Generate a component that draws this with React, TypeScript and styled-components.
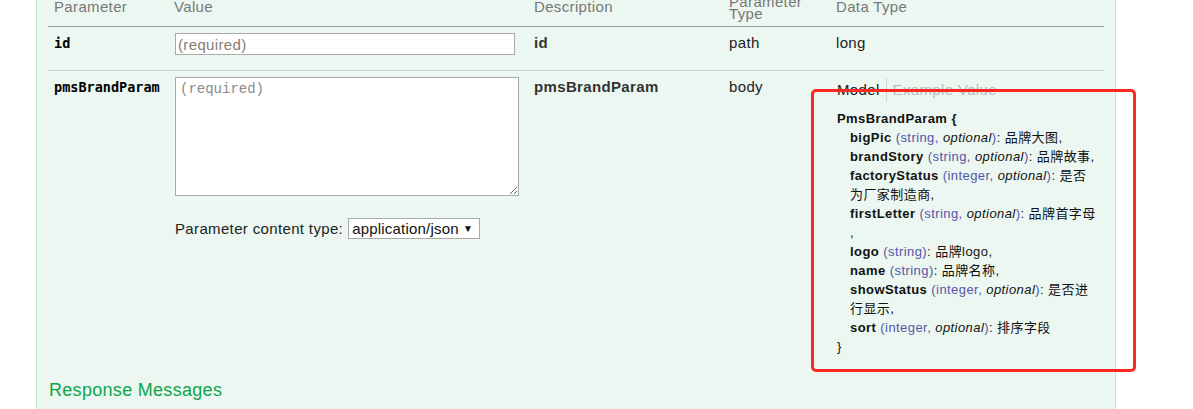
import React from "react";
import styled, { createGlobalStyle } from "styled-components";

// ---------------- Global ----------------

const GlobalStyle = createGlobalStyle`
  html, body {
    margin: 0;
    padding: 0;
    background: #ffffff;
  }
  body {
    font-family: "Liberation Sans", "Noto Sans CJK SC", sans-serif;
    letter-spacing: 0.35px;
    color: #222;
    overflow: hidden;
  }
`;

// ---------------- Styled Components ----------------

const Page = styled.div`
  position: relative;
  height: 409px;
  overflow: hidden;
  padding-left: 36px;
`;

const Panel = styled.div`
  box-sizing: border-box;
  width: 1080px;
  margin-top: -40px;
  padding: 0 11px 40px;
  background-color: #ebf7f0;
  border-left: 1px solid #c3e8d1;
  border-right: 1px solid #c3e8d1;
`;

const Table = styled.table`
  width: 1056px;
  table-layout: fixed;
  border-collapse: collapse;
`;

const Th = styled.th<{ $twoLine?: boolean }>`
  height: 56px;
  padding: 0 6px ${({ $twoLine }) => ($twoLine ? "6px" : "10px")};
  vertical-align: bottom;
  text-align: left;
  font-weight: normal;
  font-size: 15px;
  line-height: ${({ $twoLine }) => ($twoLine ? "12px" : "18px")};
  color: #777;
  border-bottom: 1px solid #999;
`;

const Tr = styled.tr<{ $last?: boolean }>`
  border-bottom: ${({ $last }) => ($last ? "none" : "1px solid #cfcfcf")};
`;

const Td = styled.td`
  padding: 6px 6px 15px;
  vertical-align: top;
  font-size: 15px;
  line-height: 20px;
`;

const Code = styled.span`
  font-family: "DejaVu Sans Mono", "Liberation Mono", monospace;
  font-weight: bold;
  font-size: 13.5px;
  letter-spacing: 0;
  color: #000;
`;

const Strong = styled.span`
  font-weight: bold;
  color: #333;
`;

const TextInput = styled.input`
  box-sizing: border-box;
  display: block;
  width: 340px;
  height: 22px;
  margin: 0 0 0 1px;
  padding: 0 2px;
  border: 1px solid #aaa;
  background: #fff;
  font-family: "Liberation Sans", sans-serif;
  font-size: 15px;
  letter-spacing: 0.35px;
  &::placeholder {
    color: #857c72;
  }
`;

const TextArea = styled.textarea`
  box-sizing: border-box;
  display: block;
  width: 344px;
  height: 119px;
  margin: 0 0 0 1px;
  padding: 3px 4px;
  border: 1px solid #aaa;
  background: #fff;
  font-family: "Liberation Mono", monospace;
  font-size: 14px;
  &::placeholder {
    color: #8a8a8a;
  }
`;

const ContentType = styled.div`
  display: flex;
  align-items: center;
  gap: 5px;
  margin-top: 22px;
  margin-left: 1px;
  font-size: 15px;
  color: #222;
`;

const SelectBox = styled.div`
  box-sizing: border-box;
  display: flex;
  align-items: center;
  width: 132px;
  height: 21px;
  border: 1px solid #a9a9a9;
  background: #fff;
  padding: 0 6px 0 3px;
`;

const Select = styled.select`
  flex: 1;
  min-width: 0;
  appearance: none;
  border: none;
  outline: none;
  background: transparent;
  padding: 0;
  font-family: "Liberation Sans", sans-serif;
  font-size: 15px;
  letter-spacing: 0.2px;
  color: #111;
`;

const Arrow = styled.span`
  font-size: 10px;
  color: #111;
`;

const Tabs = styled.div`
  display: flex;
  align-items: stretch;
  height: 24px;
  margin-top: 1px;
`;

const Tab = styled.span<{ $active?: boolean }>`
  display: flex;
  align-items: center;
  padding: ${({ $active }) => ($active ? "0 6px 0 1px" : "0 0 0 6px")};
  border-right: ${({ $active }) => ($active ? "1px solid #d5d5d5" : "none")};
  font-size: 15px;
  color: ${({ $active }) => ($active ? "#222" : "#bbb")};
`;

const Model = styled.div`
  margin-top: 7px;
  margin-left: 1px;
  padding-right: 1px;
  font-size: 13px;
  line-height: 19px;
  letter-spacing: 0.43px;
  color: #111;
`;

const ModelName = styled.div`
  font-weight: bold;
`;

const Prop = styled.div`
  margin-left: 13px;
`;

const PropName = styled.span`
  font-weight: bold;
`;

const PropType = styled.span`
  color: #55a;
`;

const Optional = styled.span`
  font-style: italic;
  color: #111;
`;

const Comma = styled.span`
  display: inline-block;
`;

const ResponseTitle = styled.h4`
  margin: 9px 0 0 1px;
  font-size: 18px;
  letter-spacing: 0.3px;
  font-weight: normal;
  color: #10a54a;
`;

const Highlight = styled.div`
  position: absolute;
  left: 811px;
  top: 89px;
  width: 325px;
  height: 283px;
  box-sizing: border-box;
  border: 3px solid #fa2a22;
  border-radius: 5px;
  pointer-events: none;
`;

// ---------------- Data ----------------

interface ModelProp {
  name: string;
  type: string;
  optional: boolean;
  desc: string;
  last?: boolean;
}

const props: ModelProp[] = [
  { name: "bigPic", type: "string", optional: true, desc: "品牌大图" },
  { name: "brandStory", type: "string", optional: true, desc: "品牌故事" },
  { name: "factoryStatus", type: "integer", optional: true, desc: "是否为厂家制造商" },
  { name: "firstLetter", type: "string", optional: true, desc: "品牌首字母" },
  { name: "logo", type: "string", optional: false, desc: "品牌logo" },
  { name: "name", type: "string", optional: false, desc: "品牌名称" },
  { name: "showStatus", type: "integer", optional: true, desc: "是否进行显示" },
  { name: "sort", type: "integer", optional: true, desc: "排序字段", last: true },
];

// ---------------- Component ----------------

const App: React.FC = () => {
  return (
    <>
      <GlobalStyle />
      <Page>
        <Panel>
          <Table>
            <colgroup>
              <col style={{ width: 120 }} />
              <col style={{ width: 360 }} />
              <col style={{ width: 195 }} />
              <col style={{ width: 107 }} />
              <col style={{ width: 274 }} />
            </colgroup>
            <thead>
              <tr>
                <Th>Parameter</Th>
                <Th>Value</Th>
                <Th>Description</Th>
                <Th $twoLine>
                  Parameter
                  <br />
                  Type
                </Th>
                <Th>Data Type</Th>
              </tr>
            </thead>
            <tbody>
              <Tr>
                <Td>
                  <Code>id</Code>
                </Td>
                <Td>
                  <TextInput placeholder="(required)" />
                </Td>
                <Td>
                  <Strong>id</Strong>
                </Td>
                <Td>path</Td>
                <Td>long</Td>
              </Tr>
              <Tr $last>
                <Td>
                  <Code>pmsBrandParam</Code>
                </Td>
                <Td>
                  <TextArea placeholder="(required)" />
                  <ContentType>
                    Parameter content type:
                    <SelectBox>
                      <Select defaultValue="application/json">
                        <option value="application/json">application/json</option>
                      </Select>
                      <Arrow>▼</Arrow>
                    </SelectBox>
                  </ContentType>
                </Td>
                <Td>
                  <Strong>pmsBrandParam</Strong>
                </Td>
                <Td>body</Td>
                <Td>
                  <Tabs>
                    <Tab $active>Model</Tab>
                    <Tab>Example Value</Tab>
                  </Tabs>
                  <Model>
                    <ModelName>PmsBrandParam {"{"}</ModelName>
                    {props.map((p) => (
                      <Prop key={p.name}>
                        <PropName>{p.name}</PropName>{" "}
                        <PropType>
                          ({p.type}
                          {p.optional && (
                            <>
                              , <Optional>optional</Optional>
                            </>
                          )}
                          )
                        </PropType>
                        : {p.desc}
                        {!p.last && <Comma>,</Comma>}
                      </Prop>
                    ))}
                    <div>{"}"}</div>
                  </Model>
                </Td>
              </Tr>
            </tbody>
          </Table>
          <ResponseTitle>Response Messages</ResponseTitle>
        </Panel>
        <Highlight />
      </Page>
    </>
  );
};

export default App;
